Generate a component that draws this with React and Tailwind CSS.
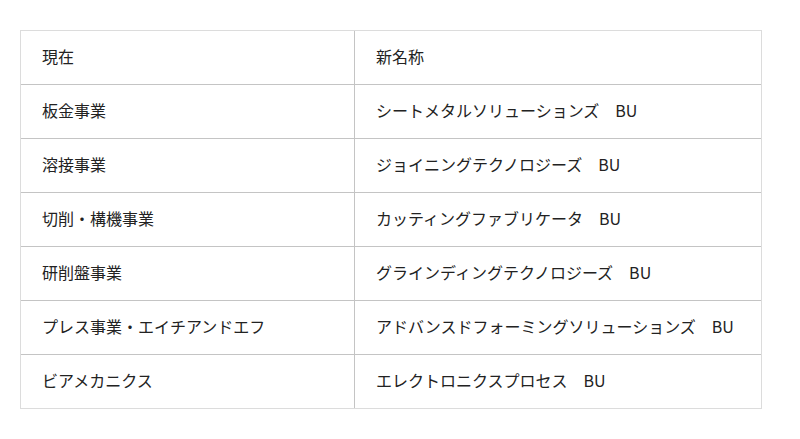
const rows = [
  ['現在', '新名称'],
  ['板金事業', 'シートメタルソリューションズ　BU'],
  ['溶接事業', 'ジョイニングテクノロジーズ　BU'],
  ['切削・構機事業', 'カッティングファブリケータ　BU'],
  ['研削盤事業', 'グラインディングテクノロジーズ　BU'],
  ['プレス事業・エイチアンドエフ', 'アドバンスドフォーミングソリューションズ　BU'],
  ['ビアメカニクス', 'エレクトロニクスプロセス　BU'],
];

export default function App() {
  return (
    <div
      className="min-h-[439px] w-[800px] bg-white pt-[30px] pl-[20px]"
      style={{ fontFamily: '"Noto Sans CJK JP", "Noto Sans", sans-serif' }}
    >
      <div className="w-[742px] border border-[#dcdcdc]">
        {rows.map(([current, next], i) => (
          <div
            key={i}
            className={`flex ${i > 0 ? 'h-[54px] border-t border-[#c4c4c4]' : 'h-[53px]'}`}
          >
            <div className="flex w-[334px] items-center border-r border-[#c4c4c4] pb-[4px] pl-[21px] text-[16px] text-[#222]">
              {current}
            </div>
            <div className="flex flex-1 items-center pb-[4px] pl-[21px] text-[16px] text-[#222]">
              {next}
            </div>
          </div>
        ))}
      </div>
    </div>
  );
}
